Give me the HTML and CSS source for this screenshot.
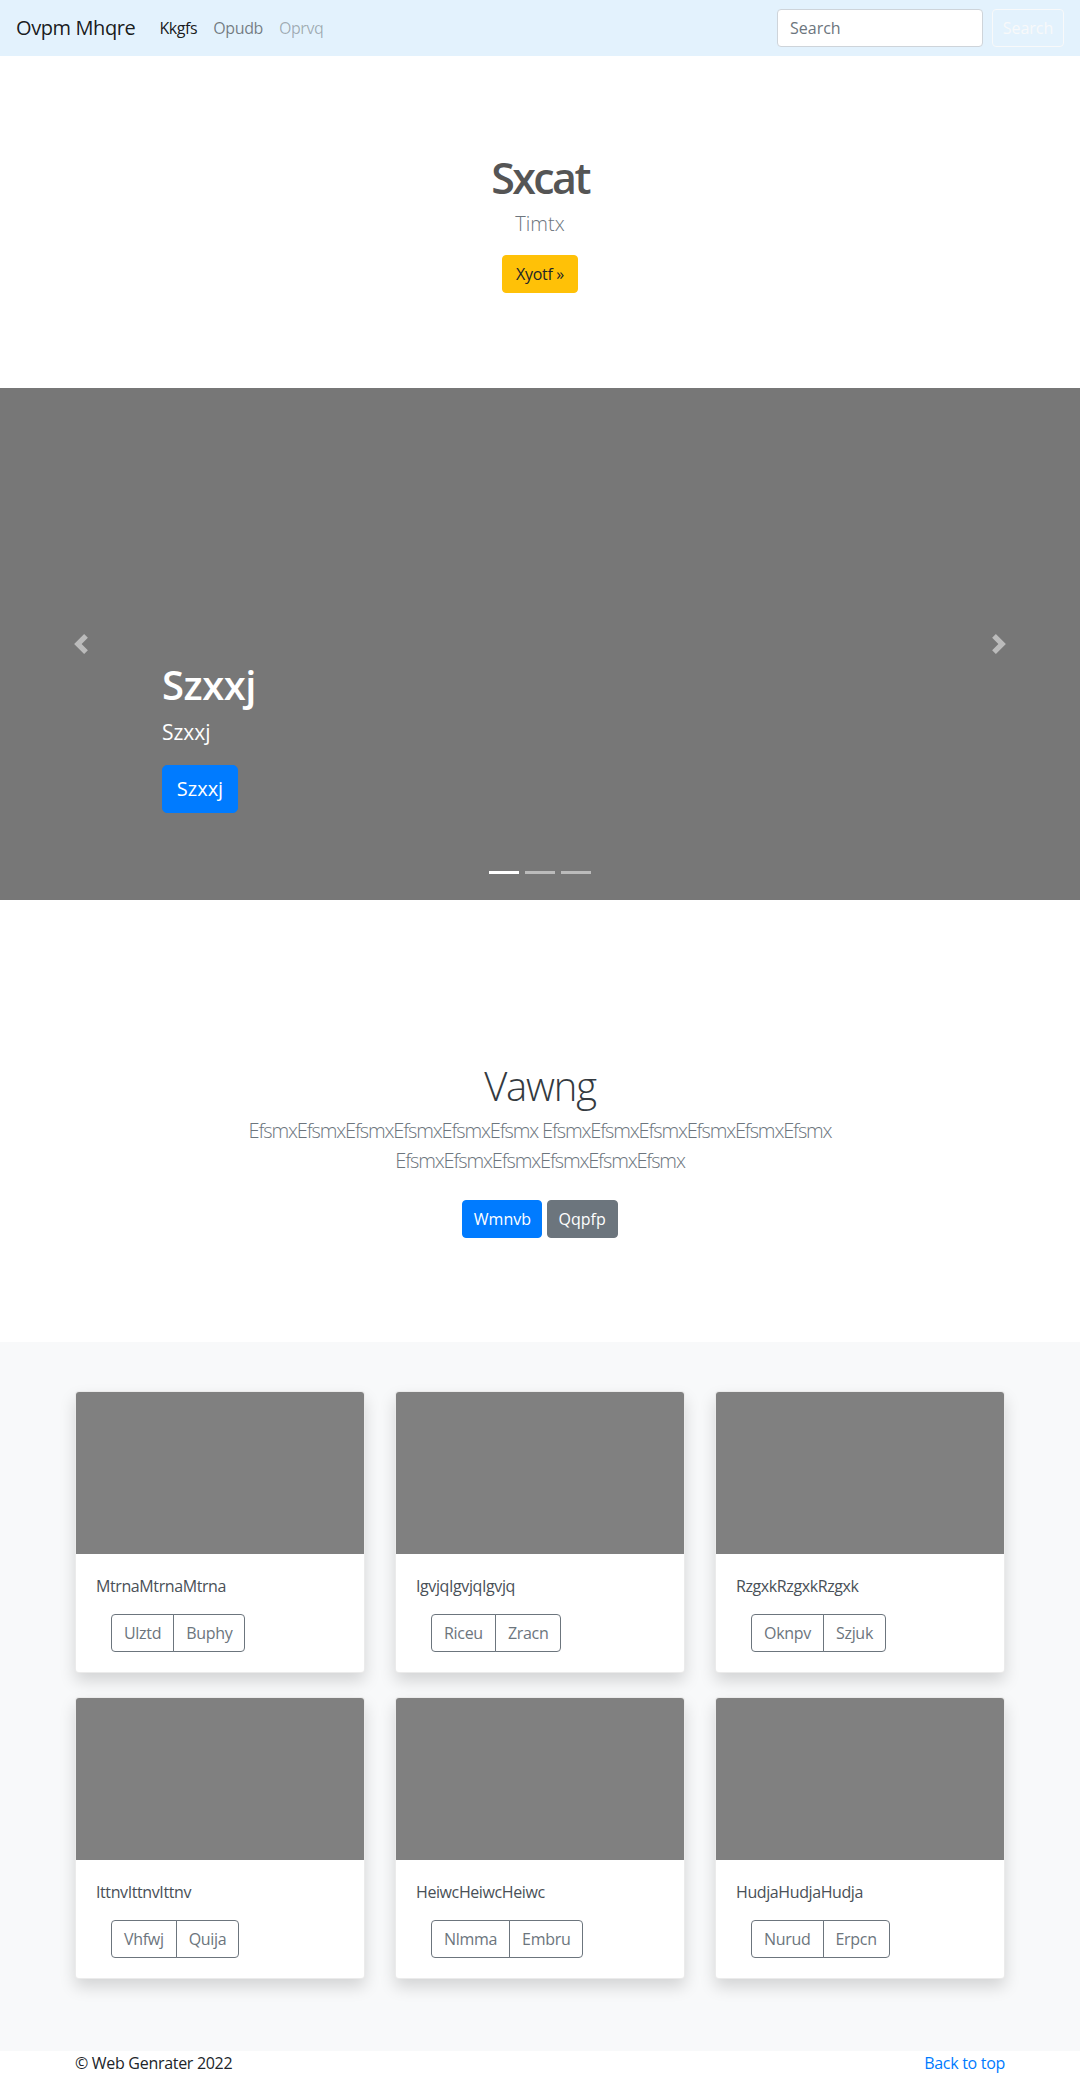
FILE: index.html
```html
<!DOCTYPE html>
<html lang="en">
<head>
<meta charset="utf-8">
<title>Ovpm Mhqre</title>
<link rel="stylesheet" href="styles.css">
</head>
<body>
<nav class="navbar">
  <a class="brand" href="#">Ovpm Mhqre</a>
  <ul class="nav-links">
    <li><a class="nav-link active" href="#">Kkgfs</a></li>
    <li><a class="nav-link" href="#">Opudb</a></li>
    <li><a class="nav-link disabled" href="#">Oprvq</a></li>
  </ul>
  <form class="search">
    <input class="search-input" type="text" placeholder="Search">
    <button class="search-btn" type="button">Search</button>
  </form>
</nav>

<section class="hero">
  <h1 class="hero-title">Sxcat</h1>
  <p class="hero-lead">Timtx</p>
  <a class="btn btn-warning hero-btn" href="#">Xyotf »</a>
</section>

<div class="carousel">
  <div class="caption">
    <h1 class="caption-title">Szxxj</h1>
    <p class="caption-text">Szxxj</p>
    <p class="caption-action"><a class="btn btn-lg btn-primary caption-btn" href="#">Szxxj</a></p>
  </div>
  <a class="control prev" href="#">
    <svg class="control-icon" viewBox="0 0 8 8" width="20" height="20"><path fill="#fff" d="M5.25 0l-4 4 4 4 1.5-1.5L4.25 4l2.5-2.5L5.25 0z"/></svg>
  </a>
  <a class="control next" href="#">
    <svg class="control-icon" viewBox="0 0 8 8" width="20" height="20"><path fill="#fff" d="M2.75 0l-1.5 1.5L3.75 4l-2.5 2.5L2.75 8l4-4-4-4z"/></svg>
  </a>
  <ol class="indicators">
    <li class="active"></li>
    <li></li>
    <li></li>
  </ol>
</div>

<section class="intro">
  <h1 class="intro-title">Vawng</h1>
  <p class="intro-lead">EfsmxEfsmxEfsmxEfsmxEfsmxEfsmx EfsmxEfsmxEfsmxEfsmxEfsmxEfsmx EfsmxEfsmxEfsmxEfsmxEfsmxEfsmx</p>
  <p class="intro-actions">
    <a class="btn btn-primary w-wmnvb" href="#">Wmnvb</a>
    <a class="btn btn-secondary w-qqpfp" href="#">Qqpfp</a>
  </p>
</section>

<section class="album">
  <div class="grid">
    <div class="card">
      <div class="card-img"></div>
      <div class="card-body">
        <p class="card-text">MtrnaMtrnaMtrna</p>
        <div class="btn-group"><a class="btn btn-outline" href="#">Ulztd</a><a class="btn btn-outline" href="#">Buphy</a></div>
      </div>
    </div>
    <div class="card">
      <div class="card-img"></div>
      <div class="card-body">
        <p class="card-text">IgvjqIgvjqIgvjq</p>
        <div class="btn-group"><a class="btn btn-outline" href="#">Riceu</a><a class="btn btn-outline" href="#">Zracn</a></div>
      </div>
    </div>
    <div class="card">
      <div class="card-img"></div>
      <div class="card-body">
        <p class="card-text">RzgxkRzgxkRzgxk</p>
        <div class="btn-group"><a class="btn btn-outline" href="#">Oknpv</a><a class="btn btn-outline" href="#">Szjuk</a></div>
      </div>
    </div>
    <div class="card">
      <div class="card-img"></div>
      <div class="card-body">
        <p class="card-text">IttnvIttnvIttnv</p>
        <div class="btn-group"><a class="btn btn-outline" href="#">Vhfwj</a><a class="btn btn-outline" href="#">Quija</a></div>
      </div>
    </div>
    <div class="card">
      <div class="card-img"></div>
      <div class="card-body">
        <p class="card-text">HeiwcHeiwcHeiwc</p>
        <div class="btn-group"><a class="btn btn-outline" href="#">Nlmma</a><a class="btn btn-outline" href="#">Embru</a></div>
      </div>
    </div>
    <div class="card">
      <div class="card-img"></div>
      <div class="card-body">
        <p class="card-text">HudjaHudjaHudja</p>
        <div class="btn-group"><a class="btn btn-outline" href="#">Nurud</a><a class="btn btn-outline" href="#">Erpcn</a></div>
      </div>
    </div>
  </div>
</section>

<footer class="footer">
  <p class="copy">© Web Genrater 2022</p>
  <p class="back"><a href="#">Back to top</a></p>
</footer>
</body>
</html>
```

FILE: styles.css
```css
* {
  box-sizing: border-box;
}

body {
  margin: 0;
  font-family: "Open Sans", "Noto Sans", sans-serif;
  font-size: 16px;
  line-height: 1.5;
  color: #212529;
  background: #fff;
}

p {
  margin: 0;
}

h1 {
  margin: 0;
}

a {
  color: #007bff;
  text-decoration: none;
}

/* Navbar */
.navbar {
  display: flex;
  align-items: center;
  height: 56px;
  padding: 8px 16px;
  background: #e3f2fd;
}

.brand {
  font-size: 20px;
  line-height: 30px;
  padding: 5px 0;
  margin-right: 16px;
  color: rgba(0, 0, 0, 0.9);
  letter-spacing: -0.4px;
}

.nav-links {
  display: flex;
  flex: 1;
  list-style: none;
  margin: 0;
  padding: 0;
}

.nav-link {
  display: block;
  padding: 8px;
  color: rgba(0, 0, 0, 0.5);
  letter-spacing: -0.4px;
}

.nav-link.active {
  color: rgba(0, 0, 0, 0.9);
}

.nav-link.disabled {
  color: rgba(0, 0, 0, 0.3);
}

.search {
  display: flex;
  align-items: center;
  margin: 0;
}

.search-input {
  width: 206px;
  height: 38px;
  padding: 6px 12px;
  margin-right: 9px;
  font-family: inherit;
  font-size: 16px;
  color: #495057;
  background: #fff;
  border: 1px solid #ced4da;
  border-radius: 4px;
}

.search-input::placeholder {
  color: #6c757d;
}

.search-btn {
  width: 72px;
  height: 38px;
  padding: 0;
  font-family: inherit;
  font-size: 16px;
  color: #f8f9fa;
  background: transparent;
  border: 1px solid #f8f9fa;
  border-radius: 4px;
}

/* Buttons */
.btn {
  display: inline-block;
  padding: 6px 12px;
  font-size: 16px;
  line-height: 24px;
  text-align: center;
  border: 1px solid transparent;
  border-radius: 4px;
  white-space: nowrap;
}

.btn-warning {
  color: #212529;
  background: #ffc107;
  border-color: #ffc107;
}

.btn-primary {
  color: #fff;
  background: #007bff;
  border-color: #007bff;
}

.btn-secondary {
  color: #fff;
  background: #6c757d;
  border-color: #6c757d;
}

.btn-lg {
  padding: 8px 16px;
  font-size: 20px;
  line-height: 30px;
  border-radius: 5px;
}

/* Hero */
.hero {
  text-align: center;
  padding: 94px 0 95px;
}

.hero-title {
  font-size: 43px;
  line-height: 52.8px;
  font-weight: 600;
  color: #555;
  margin-bottom: 6px;
  letter-spacing: -2.6px;
  position: relative;
  top: 2px;
}

.hero-lead {
  font-size: 20px;
  line-height: 30px;
  font-weight: 300;
  color: #6c757d;
  margin-bottom: 16px;
}

.hero-btn {
  width: 76px;
  padding-left: 0;
  padding-right: 0;
  letter-spacing: -0.3px;
}

/* Carousel */
.carousel {
  position: relative;
  height: 512px;
  background: #777;
  margin-bottom: 64px;
}

.caption {
  position: absolute;
  left: 15%;
  right: 15%;
  bottom: 51px;
  padding: 20px 0;
  color: #fff;
}

.caption-title {
  font-size: 40px;
  line-height: 48px;
  font-weight: 600;
  margin-bottom: 8px;
  letter-spacing: -0.5px;
}

.caption-text {
  font-size: 21px;
  line-height: 31.5px;
  margin-bottom: 16px;
}

.caption-action {
  margin-bottom: 16px;
}

.caption-btn {
  width: 76px;
  padding-left: 0;
  padding-right: 0;
}

.control {
  position: absolute;
  top: 0;
  bottom: 0;
  width: 15%;
  display: flex;
  align-items: center;
  justify-content: center;
  opacity: 0.5;
}

.control.prev {
  left: 0;
}

.control.next {
  right: 0;
}

.control-icon {
  display: block;
}

.indicators {
  position: absolute;
  left: 0;
  right: 0;
  bottom: 0;
  display: flex;
  justify-content: center;
  list-style: none;
  margin: 0 0 16px;
  padding: 0;
}

.indicators li {
  width: 30px;
  height: 3px;
  margin: 10px 3px;
  background: rgba(255, 255, 255, 0.5);
}

.indicators li.active {
  background: #fff;
}

/* Intro */
.intro {
  text-align: center;
  padding: 96px 0;
}

.intro-title {
  font-size: 40px;
  line-height: 48px;
  font-weight: 300;
  color: #343a40;
  margin-bottom: 8px;
  letter-spacing: -1.2px;
  position: relative;
  top: 2px;
}

.intro-lead {
  max-width: 700px;
  margin: 0 auto 16px;
  font-size: 20px;
  line-height: 30px;
  font-weight: 300;
  color: #6c757d;
  letter-spacing: -1.15px;
}

.intro-actions .btn {
  margin: 8px 0;
  padding-left: 0;
  padding-right: 0;
}

.w-wmnvb {
  width: 80px;
}

.w-qqpfp {
  width: 71px;
}

/* Album */
.album {
  background: #f8f9fa;
  padding: 49px 0 48px;
}

.grid {
  width: 930px;
  margin: 0 auto;
  display: grid;
  grid-template-columns: repeat(3, 1fr);
  column-gap: 30px;
  row-gap: 24px;
  padding-bottom: 24px;
}

.card {
  background: #fff;
  border: 1px solid rgba(0, 0, 0, 0.08);
  border-radius: 4px;
  overflow: hidden;
  box-shadow: 0 8px 16px rgba(0, 0, 0, 0.15);
}

.card-img {
  height: 162px;
  background: #808080;
}

.card-body {
  padding: 20px;
}

.card-text {
  color: #495057;
  margin-bottom: 16px;
  letter-spacing: -0.4px;
}

.btn-group {
  display: inline-flex;
  margin-left: 15px;
}

.btn-outline {
  color: #6c757d;
  background: transparent;
  border-color: #6c757d;
  letter-spacing: -0.3px;
}

.btn-group .btn-outline:first-child {
  border-top-right-radius: 0;
  border-bottom-right-radius: 0;
}

.btn-group .btn-outline:last-child {
  margin-left: -1px;
  border-top-left-radius: 0;
  border-bottom-left-radius: 0;
}

/* Footer */
.footer {
  width: 930px;
  margin: 0 auto;
  display: flex;
  justify-content: space-between;
}

.copy {
  color: #212529;
  letter-spacing: -0.3px;
}

.back a {
  color: #007bff;
  letter-spacing: -0.3px;
}
```
